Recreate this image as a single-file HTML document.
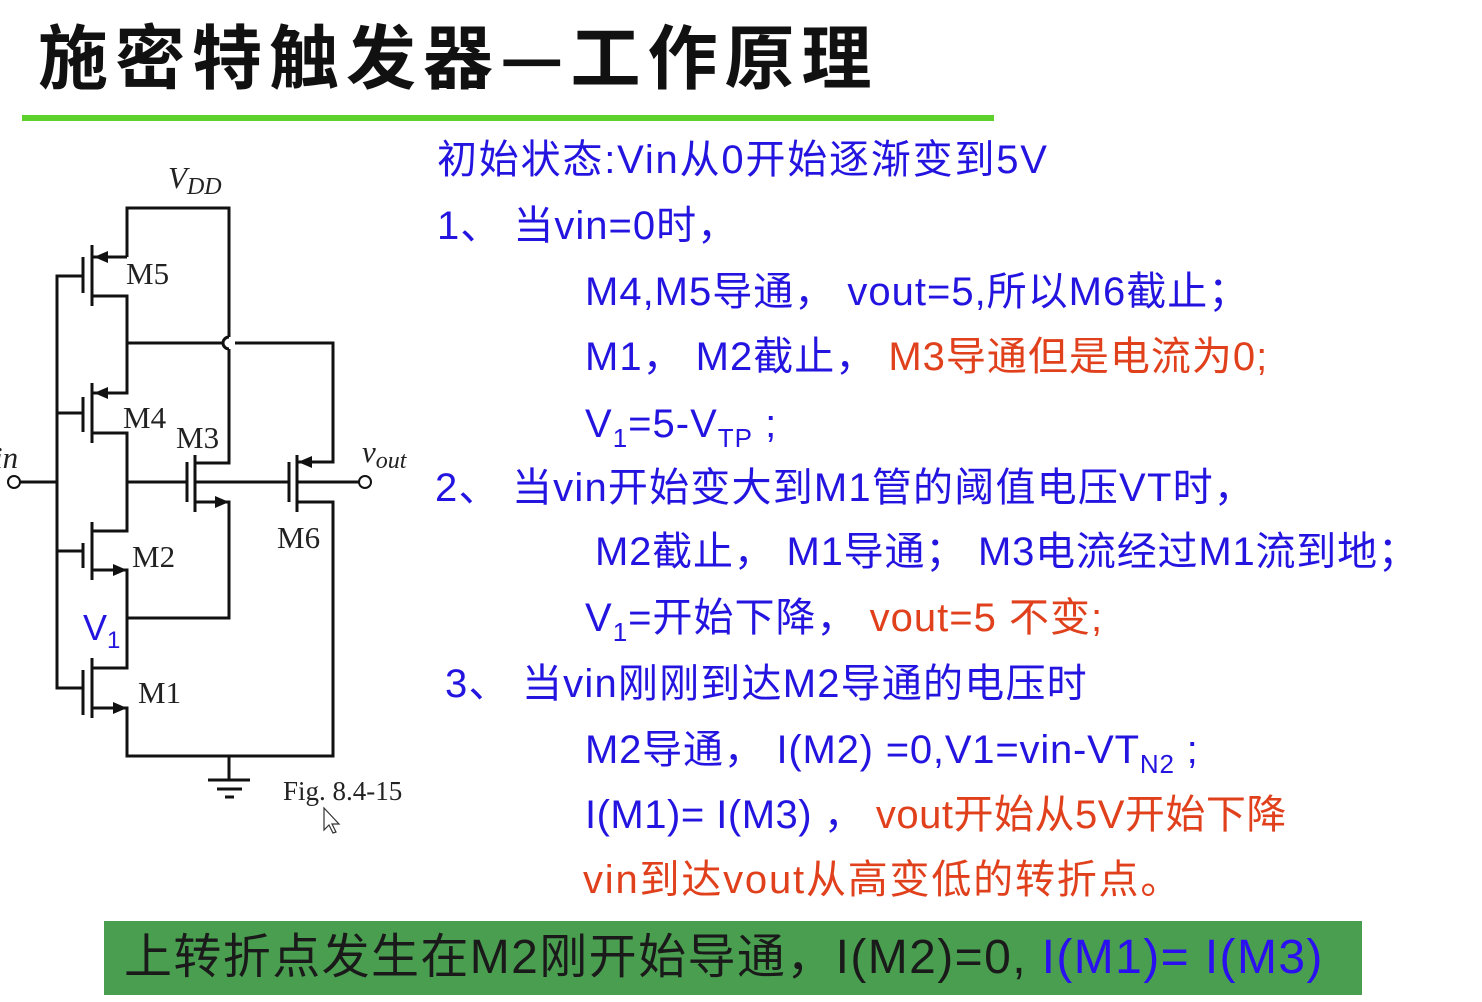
<!DOCTYPE html>
<html><head><meta charset="utf-8"><style>
body{margin:0;width:1482px;height:1002px;background:#fff;position:relative;overflow:hidden;font-family:"Liberation Sans","Noto Sans CJK SC",sans-serif}
.t{position:absolute;white-space:nowrap;font-size:40px;line-height:48px;color:#2414e0;letter-spacing:1px}
.r{color:#e0401c}
.k{color:#1a1a1a}
sub{font-size:26px;vertical-align:-10px;line-height:0}
#title{position:absolute;left:38px;top:12px;font-size:70px;font-weight:bold;letter-spacing:7px;color:#111;white-space:nowrap;font-family:"Noto Sans CJK SC",sans-serif;line-height:84px}
#bar{position:absolute;left:22px;top:115px;width:972px;height:6px;background:#5ed22c}
#box{position:absolute;left:104px;top:921px;width:1258px;height:74px;background:#4a9e50}
</style></head><body>
<div id="title">施密特触发器—工作原理</div>
<div id="bar"></div>
<svg style="position:absolute;left:0;top:0" width="430" height="840" viewBox="0 0 430 840">
<g fill="none" stroke="#111" stroke-width="3">
<polyline points="127,257 127,208 229,208 229,337"/>
<path d="M229,337 a6,6 0 0 0 0,12"/>
<polyline points="229,349 229,463 196,463"/>
<polyline points="93,257 127,257"/>
<line x1="92" y1="245" x2="92" y2="306"/>
<line x1="83" y1="257" x2="83" y2="293"/>
<polyline points="83,276 57,276 57,688 83,688"/>
<polyline points="92,296 127,296 127,393 93,393"/>
<line x1="127" y1="343" x2="223" y2="343"/>
<polyline points="235,343 333,343 333,462 297,462"/>
<line x1="92" y1="383" x2="92" y2="443"/>
<line x1="83" y1="397" x2="83" y2="432"/>
<line x1="57" y1="413" x2="83" y2="413"/>
<polyline points="92,433 127,433 127,531 92,531"/>
<line x1="20" y1="482" x2="57" y2="482"/>
<line x1="127" y1="482" x2="187" y2="482"/>
<line x1="195" y1="482" x2="289" y2="482"/>
<line x1="297" y1="482" x2="359" y2="482"/>
<line x1="187" y1="462" x2="187" y2="502"/>
<line x1="195" y1="455" x2="195" y2="512"/>
<line x1="289" y1="462" x2="289" y2="502"/>
<line x1="297" y1="455" x2="297" y2="512"/>
<polyline points="196,502 229,502 229,618 127,618"/>
<polyline points="297,502 333,502 333,756 127,756 127,708 93,708"/>
<line x1="92" y1="522" x2="92" y2="580"/>
<line x1="83" y1="543" x2="83" y2="568"/>
<line x1="57" y1="551" x2="83" y2="551"/>
<polyline points="93,570 127,570 127,668 92,668"/>
<line x1="92" y1="658" x2="92" y2="718"/>
<line x1="83" y1="670" x2="83" y2="715"/>
<line x1="229" y1="756" x2="229" y2="780"/>
<line x1="208" y1="780" x2="250" y2="780"/>
<line x1="217" y1="789" x2="242" y2="789"/>
<line x1="225" y1="797" x2="234" y2="797"/>
<circle cx="14" cy="482" r="6" stroke-width="2"/>
<circle cx="365" cy="482" r="6" stroke-width="2"/>
</g>
<g fill="#111">
<polygon points="94,257 108,251 108,263"/>
<polygon points="94,393 108,387 108,399"/>
<polygon points="298,462 312,456 312,468"/>
<polygon points="229,502 215,496 215,508"/>
<polygon points="127,570 113,564 113,576"/>
<polygon points="127,708 113,702 113,714"/>
</g>
<g font-family="Liberation Serif,serif" font-size="31" fill="#222">
<text x="168" y="188" font-style="italic">V<tspan font-size="24" dy="6">DD</tspan></text>
<text x="126" y="284">M5</text>
<text x="123" y="428">M4</text>
<text x="176" y="448">M3</text>
<text x="277" y="548">M6</text>
<text x="132" y="567">M2</text>
<text x="138" y="703">M1</text>
<text x="-6" y="468" font-style="italic">in</text>
<text x="362" y="462" font-style="italic">v<tspan font-size="24" dy="6">out</tspan></text>
<text x="283" y="800" font-size="27">Fig. 8.4-15</text>
</g>
<text x="83" y="640" font-family="Liberation Sans,sans-serif" font-size="36" fill="#2414e0">V<tspan font-size="24" dy="8">1</tspan></text>
<path d="M324,808 l0,22 l5,-5 l4,8 l3,-1 l-4,-8 l7,0 z" fill="#fff" stroke="#333" stroke-width="1.2"/>
</svg>
<div class="t" style="left:437px;top:136px;letter-spacing:1.8px">初始状态:Vin从0开始逐渐变到5V</div>
<div class="t" style="left:437px;top:202px">1、 当vin=0时，</div>
<div class="t" style="left:585px;top:268px">M4,M5导通， vout=5,所以M6截止；</div>
<div class="t" style="left:585px;top:333px">M1， M2截止， <span class="r">M3导通但是电流为0;</span></div>
<div class="t" style="left:585px;top:400px">V<sub>1</sub>=5-V<sub>TP</sub> ;</div>
<div class="t" style="left:435px;top:464px;letter-spacing:1.2px">2、 当vin开始变大到M1管的阈值电压VT时，</div>
<div class="t" style="left:595px;top:528px;letter-spacing:0.8px">M2截止， M1导通； M3电流经过M1流到地；</div>
<div class="t" style="left:585px;top:594px">V<sub>1</sub>=开始下降， <span class="r">vout=5 不变;</span></div>
<div class="t" style="left:445px;top:660px;letter-spacing:1.2px">3、 当vin刚刚到达M2导通的电压时</div>
<div class="t" style="left:585px;top:726px;letter-spacing:0.8px">M2导通， I(M2) =0,V1=vin-VT<sub>N2</sub> ;</div>
<div class="t" style="left:585px;top:791px;letter-spacing:0.5px">I(M1)= I(M3) ， <span class="r">vout开始从5V开始下降</span></div>
<div class="t r" style="left:583px;top:856px;letter-spacing:1.8px">vin到达vout从高变低的转折点。</div>
<div id="box"></div>
<div class="t k" style="left:124px;top:928px;font-size:48px;line-height:60px;letter-spacing:1.4px">上转折点发生在M2刚开始导通，I(M2)=0, <span style="color:#2a10f0">I(M1)= I(M3)</span></div>
</body></html>
